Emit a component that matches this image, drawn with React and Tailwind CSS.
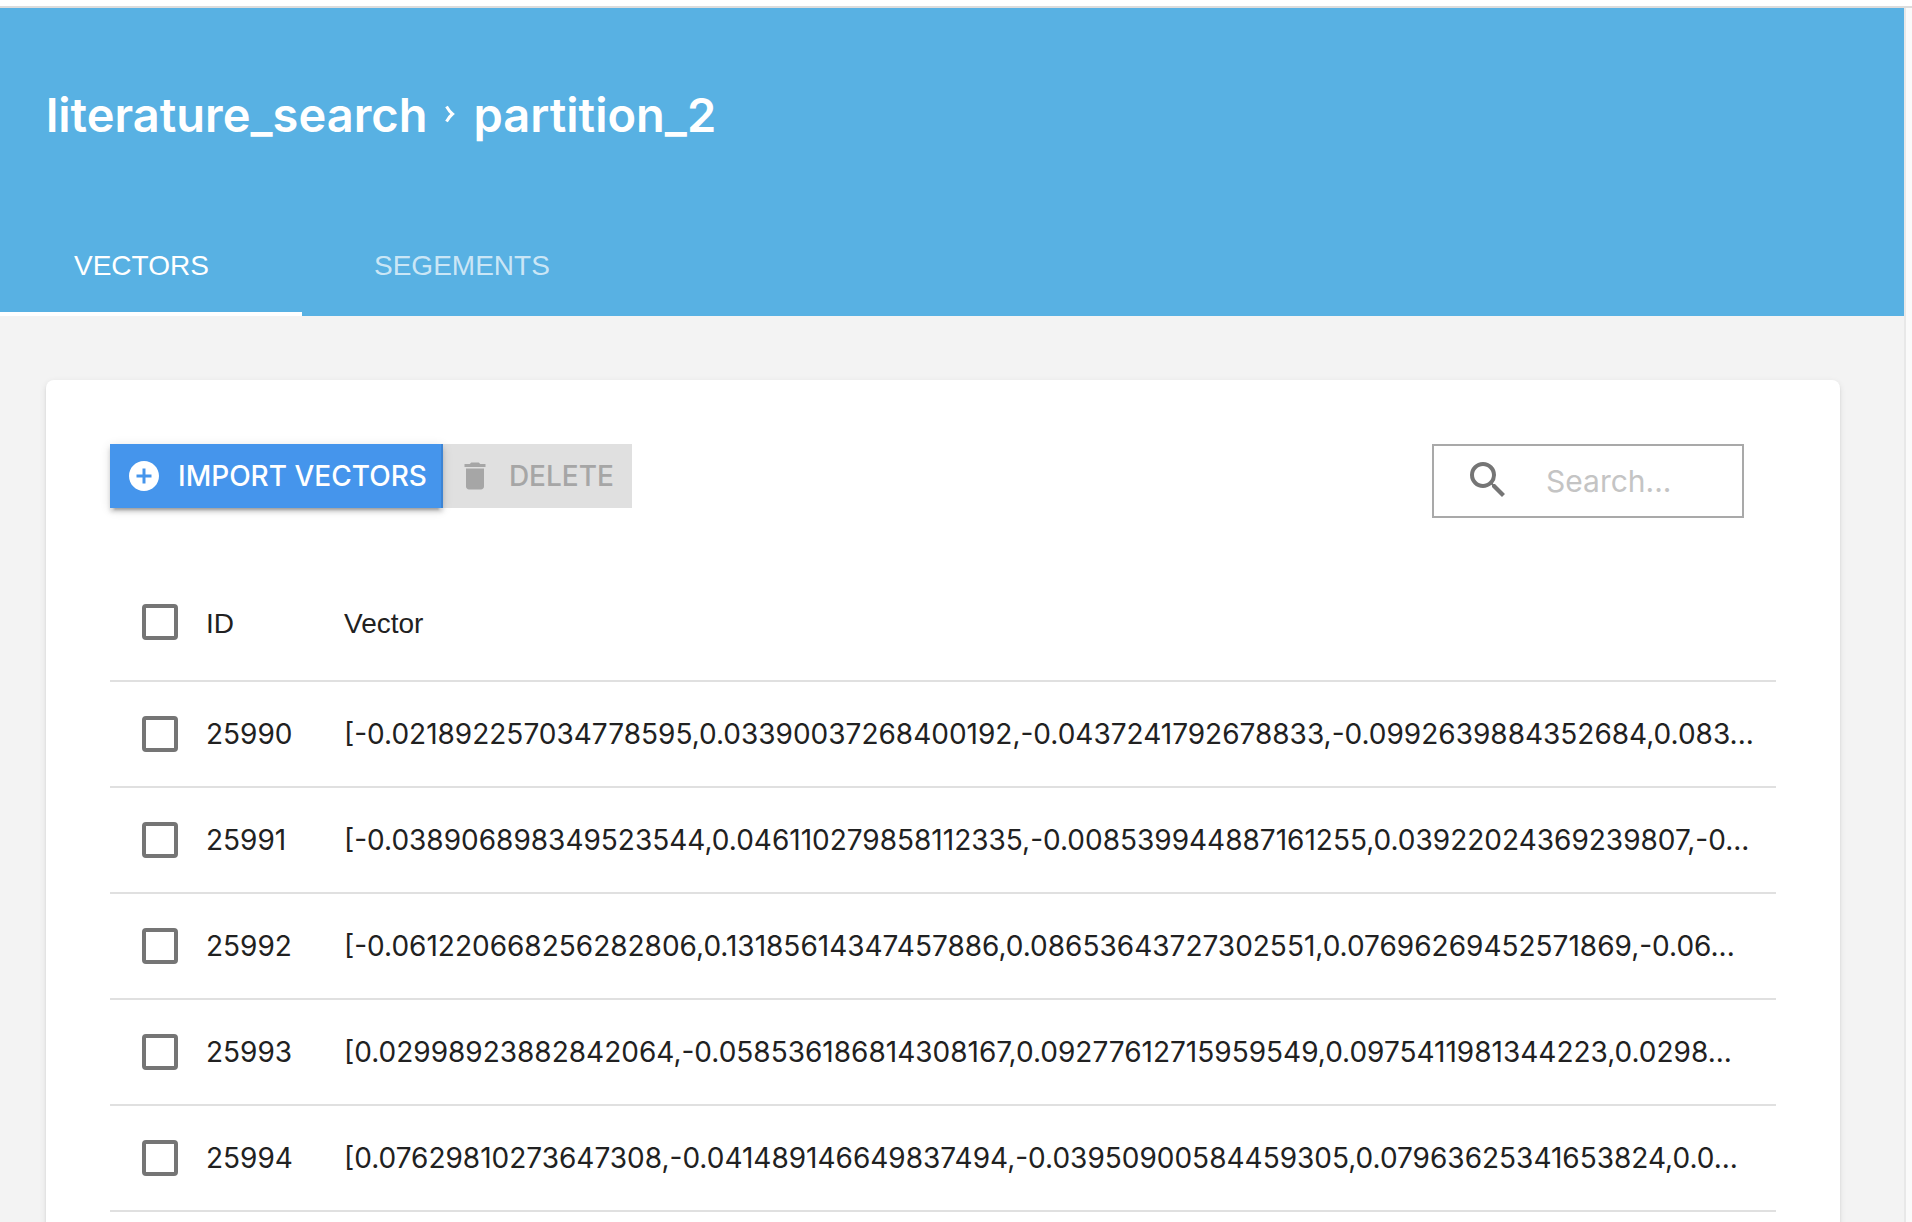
import React from 'react';
import { MdAddCircle, MdDelete, MdSearch } from 'react-icons/md';

const rows = [
  { id: '25990', vector: '[-0.021892257034778595,0.03390037268400192,-0.0437241792678833,-0.0992639884352684,0.083...' },
  { id: '25991', vector: '[-0.038906898349523544,0.046110279858112335,-0.008539944887161255,0.03922024369239807,-0...' },
  { id: '25992', vector: '[-0.061220668256282806,0.13185614347457886,0.08653643727302551,0.07696269452571869,-0.06...' },
  { id: '25993', vector: '[0.02998923882842064,-0.058536186814308167,0.09277612715959549,0.0975411981344223,0.0298...' },
  { id: '25994', vector: '[0.07629810273647308,-0.041489146649837494,-0.03950900584459305,0.07963625341653824,0.0...' },
];

function Checkbox({ label }) {
  return (
    <input
      type="checkbox"
      aria-label={label}
      className="block size-9 appearance-none rounded-[4px] border-4 border-[#757575] bg-white checked:bg-[#4595ec]"
    />
  );
}

function Header() {
  return (
    <header className="flex flex-col bg-[#58b1e3] text-white">
      <h1 className="flex h-52 items-center px-[46px] pt-1 font-['Inter',sans-serif] text-[47px] font-semibold leading-none">
        <a href="#collection">literature_search</a>
        <svg viewBox="0 0 10 18" className="mx-[18px] h-[18px] w-[10px]" fill="none" stroke="currentColor" strokeWidth="3" aria-hidden="true">
          <path d="M1.5 1.5C3.500 5 5 7 7.500 9C5 11 3.500 13 1.500 16.500" />
        </svg>
        <span>partition_2</span>
      </h1>
      <div role="tablist" className="flex text-[28px] leading-8">
        <button role="tab" aria-selected="true" className="h-[100px] w-[302px] border-b-4 border-white px-[74px] pt-1 text-left">
          VECTORS
        </button>
        <button role="tab" aria-selected="false" className="h-[100px] border-b-4 border-transparent px-[72px] pt-1 text-left text-white/70">
          SEGEMENTS
        </button>
      </div>
    </header>
  );
}

function Toolbar() {
  return (
    <div className="flex items-start justify-between pr-8">
      <div className="flex font-['Inter',sans-serif] text-[28px] font-medium leading-8">
        <button className="z-10 flex h-16 items-center border-r-2 border-[#3c84d4] bg-[#4595ec] pl-4 pr-[14px] text-white shadow-[0_6px_2px_-4px_rgba(0,0,0,0.2),0_4px_4px_rgba(0,0,0,0.14),0_2px_10px_rgba(0,0,0,0.12)]">
          <MdAddCircle className="mr-4 size-9" />
          IMPORT VECTORS
        </button>
        <button disabled className="flex h-16 items-center bg-[#e0e0e0] pl-[14px] pr-[18px] text-[#a6a6a6]">
          <MdDelete className="mr-4 size-9" />
          DELETE
        </button>
      </div>
      <label className="flex h-[74px] w-[312px] items-center border-2 border-[#a9a9a9] pl-[30px] text-[#757575]">
        <MdSearch className="mb-[2px] mr-[34px] size-12 shrink-0" />
        <input
          type="text"
          placeholder="Search..."
          aria-label="Search"
          className="w-full min-w-0 bg-transparent font-['Inter',sans-serif] text-[30px] leading-9 text-[#212121] outline-none placeholder:text-[#c4c4c4]"
        />
      </label>
    </div>
  );
}

function VectorTable() {
  return (
    <table className="mt-[45px] w-full table-fixed text-left text-[#212121]">
      <thead>
        <tr className="h-[118px] border-b-2 border-[#e0e0e0] text-[28px] leading-8">
          <th className="w-24 pl-8"><Checkbox label="Select all" /></th>
          <th className="w-[138px] pt-1 font-normal">ID</th>
          <th className="pt-1 font-normal">Vector</th>
        </tr>
      </thead>
      <tbody className="font-['Inter',sans-serif] text-[28px] leading-8">
        {rows.map((row) => (
          <tr key={row.id} className="h-[106px] border-b-2 border-[#e0e0e0]">
            <td className="pl-8"><Checkbox label={'Select ' + row.id} /></td>
            <td>{row.id}</td>
            <td className="whitespace-nowrap">{row.vector}</td>
          </tr>
        ))}
      </tbody>
    </table>
  );
}

export default function App() {
  return (
    <div className="flex h-screen flex-col overflow-hidden bg-white pt-[6px] font-['Liberation_Sans',Arial,sans-serif]">
      <div className="flex min-h-0 grow border-t-2 border-[#dcdcdc] bg-[#fafafa]">
        <div className="mr-[6px] min-w-0 grow border-r-2 border-[#e8e8e8] bg-[#f3f3f3]">
          <Header />
          <main className="pb-16 pl-[46px] pr-16 pt-16">
            <section className="rounded-lg bg-white px-16 pb-24 pt-16 shadow-[0_4px_2px_-2px_rgba(0,0,0,0.08),0_2px_2px_rgba(0,0,0,0.08),0_2px_6px_rgba(0,0,0,0.1)]">
              <Toolbar />
              <VectorTable />
            </section>
          </main>
        </div>
      </div>
    </div>
  );
}
